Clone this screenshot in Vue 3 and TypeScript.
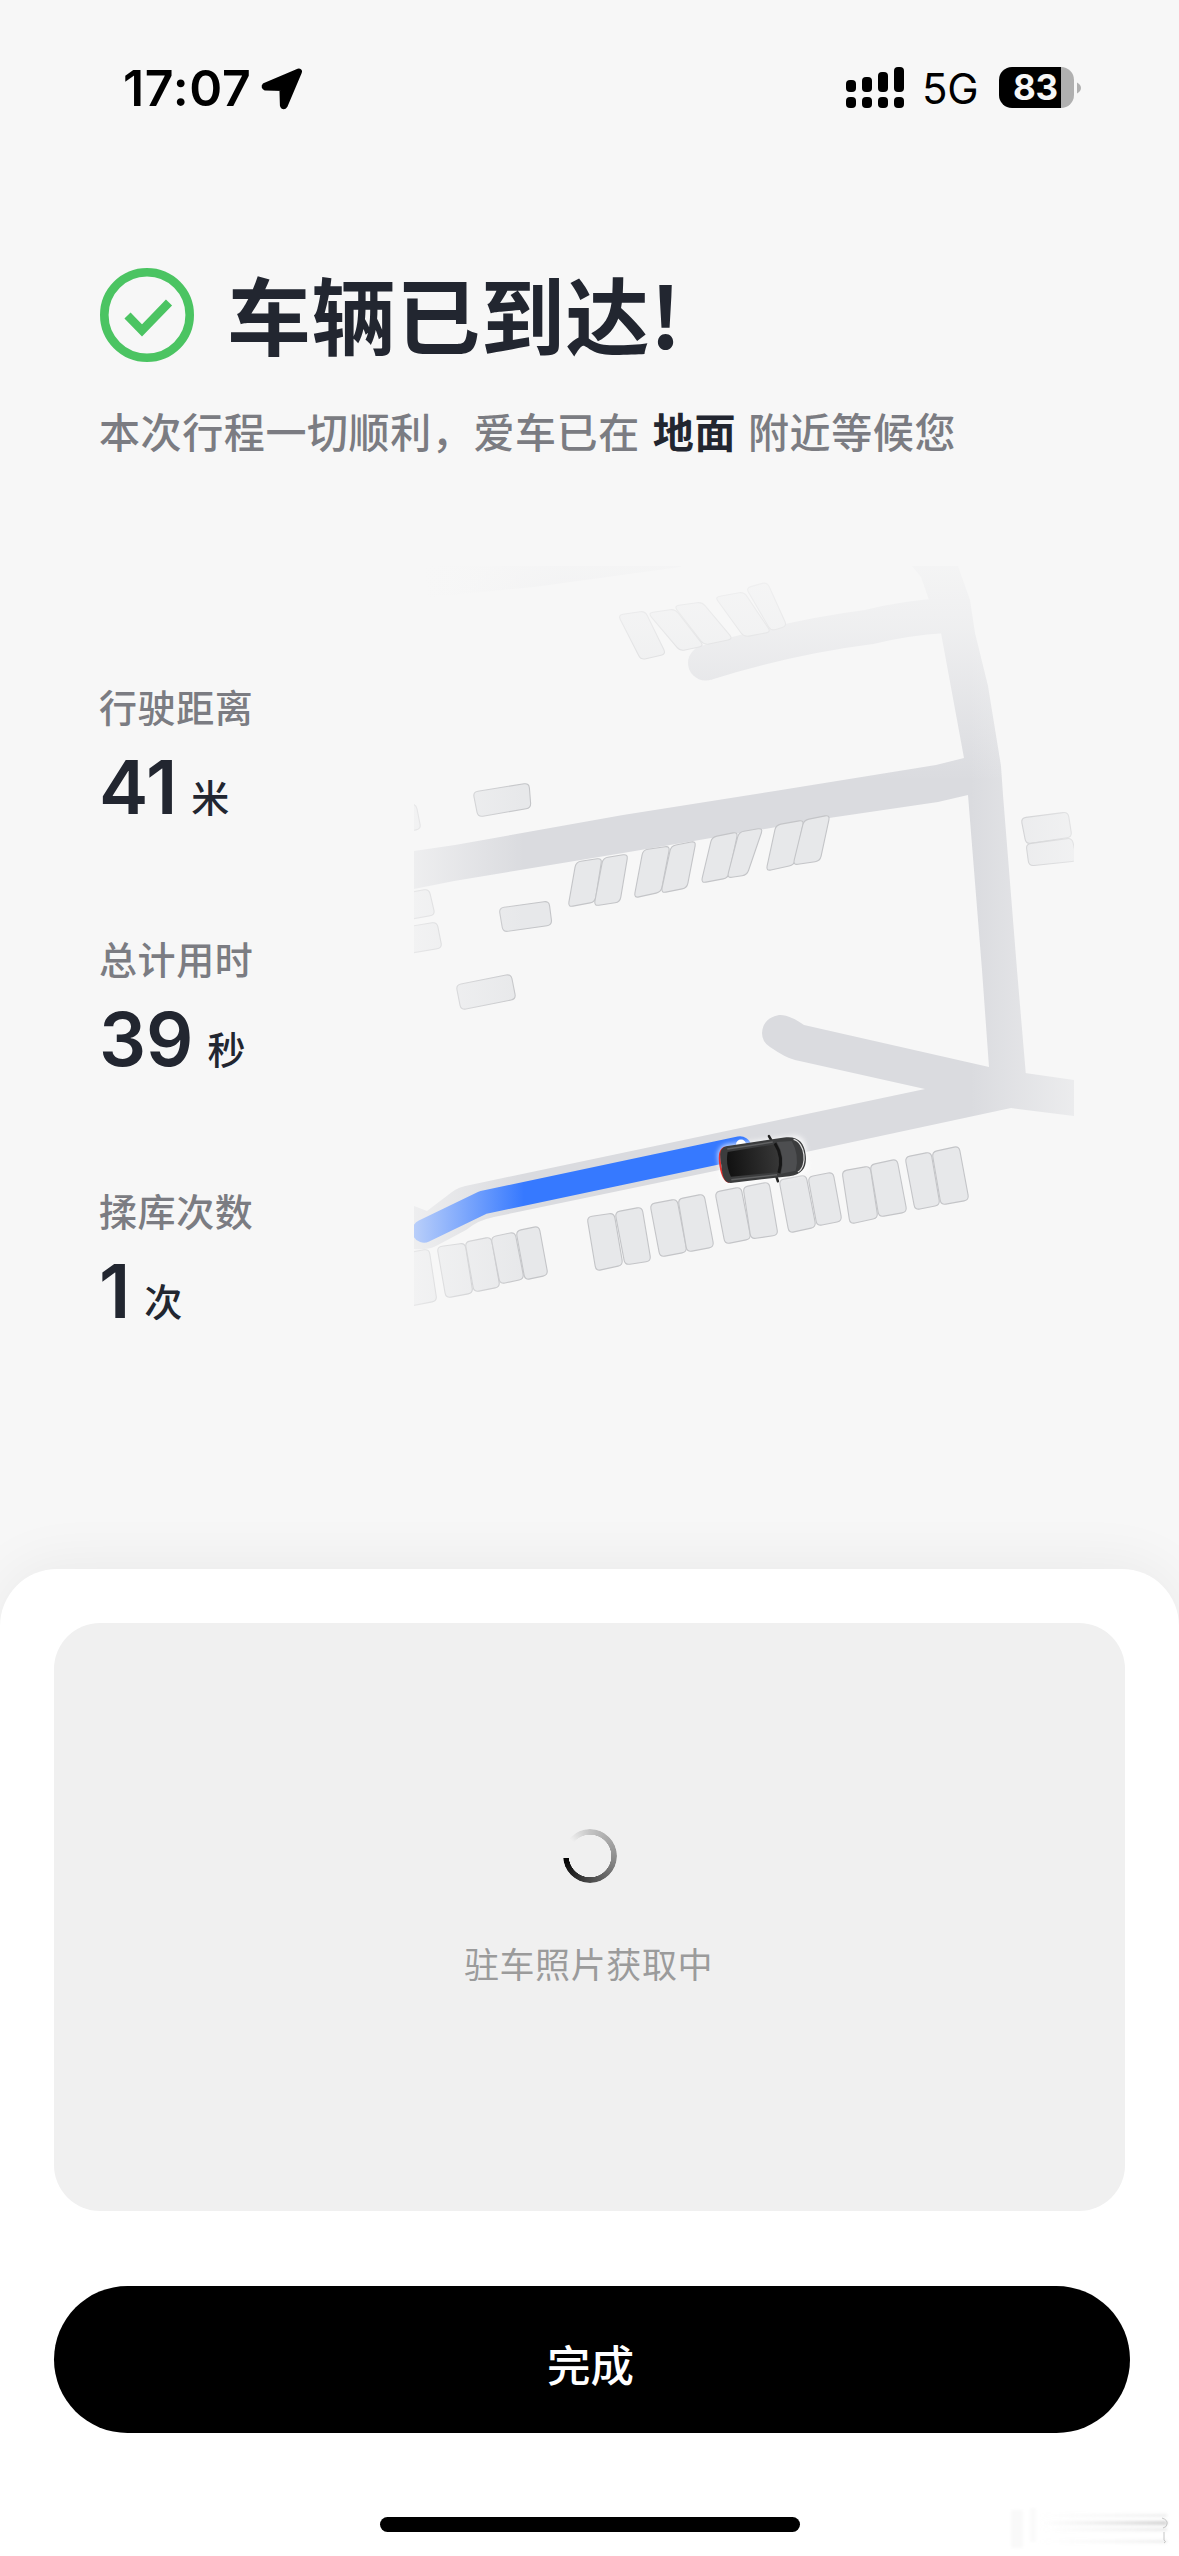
<script setup lang="ts">
type Point = [number, number]

const stats = [
  { label: '行驶距离', value: 41, unit: '米' },
  { label: '总计用时', value: 39, unit: '秒' },
  { label: '揉库次数', value: 1, unit: '次' },
]

const signal = [12, 15, 20, 25]

// parking slots, four corners each
const slots: number[][] = [
  [618, 615, 645, 611, 666, 654, 641, 660],
  [648, 613, 675, 609, 704, 646, 680, 651],
  [674, 606, 702, 602, 733, 639, 704, 645],
  [715, 597, 744, 592, 771, 632, 744, 637],
  [746, 588, 767, 582, 787, 626, 771, 631],
  [473, 792, 529, 783, 531, 808, 478, 817],
  [499, 908, 549, 901, 552, 925, 503, 932],
  [456, 985, 511, 974, 516, 999, 461, 1010],
  [400, 804, 416, 804, 421, 829, 400, 833],
  [400, 894, 429, 889, 435, 915, 400, 921],
  [400, 928, 437, 922, 442, 948, 400, 955],
  [576, 862, 602, 858, 595, 902, 568, 907],
  [603, 858, 628, 854, 620, 902, 594, 906],
  [643, 850, 670, 846, 661, 892, 634, 898],
  [671, 846, 696, 841, 687, 888, 661, 893],
  [712, 837, 738, 832, 728, 878, 701, 883],
  [739, 832, 763, 828, 747, 875, 727, 878],
  [776, 825, 804, 820, 794, 865, 766, 871],
  [804, 820, 830, 815, 820, 861, 793, 865],
  [1021, 818, 1068, 812, 1072, 837, 1026, 844],
  [1026, 844, 1072, 838, 1077, 861, 1029, 866],
  [400, 1254, 429, 1249, 437, 1301, 400, 1308],
  [437, 1247, 465, 1243, 473, 1293, 446, 1298],
  [465, 1242, 491, 1237, 500, 1287, 474, 1292],
  [491, 1237, 515, 1232, 524, 1279, 500, 1284],
  [516, 1231, 539, 1226, 548, 1275, 525, 1280],
  [587, 1217, 614, 1213, 623, 1265, 596, 1271],
  [615, 1212, 642, 1207, 651, 1261, 625, 1265],
  [650, 1204, 677, 1199, 687, 1252, 660, 1257],
  [678, 1199, 704, 1194, 714, 1247, 687, 1252],
  [715, 1192, 741, 1187, 751, 1239, 725, 1244],
  [743, 1187, 769, 1182, 778, 1235, 751, 1239],
  [779, 1180, 806, 1175, 816, 1227, 789, 1233],
  [808, 1177, 833, 1172, 842, 1221, 817, 1226],
  [842, 1171, 870, 1166, 878, 1218, 850, 1224],
  [870, 1165, 897, 1159, 907, 1212, 879, 1217],
  [905, 1157, 931, 1152, 940, 1205, 915, 1210],
  [932, 1152, 959, 1146, 969, 1200, 941, 1205],
]

// quad outline with softened corners
function slotPath(c: number[], r = 5) {
  const pts: Point[] = [[c[0], c[1]], [c[2], c[3]], [c[4], c[5]], [c[6], c[7]]]
  const toward = (a: Point, b: Point) => {
    const d = Math.hypot(b[0] - a[0], b[1] - a[1])
    return `${(a[0] + ((b[0] - a[0]) * r) / d).toFixed(1)} ${(a[1] + ((b[1] - a[1]) * r) / d).toFixed(1)}`
  }
  return pts.map((p, i) => {
    const prev = pts[(i + 3) % 4]
    const next = pts[(i + 1) % 4]
    return `${i ? 'L' : 'M'}${toward(p, prev)}Q${p[0]} ${p[1]} ${toward(p, next)}`
  }).join('') + 'Z'
}
</script>

<template>
  <div class="screen">
    <header class="status">
      <span class="time">17:07</span>
      <svg class="locate" viewBox="0 0 40 40">
        <path d="M36 3.500 L4 17 Q3 18 4.500 18.500 L20.500 19 L21 35.500 Q21.500 37 22.500 35.500 Z" fill="#000" stroke="#000" stroke-width="6" stroke-linejoin="round" />
      </svg>
      <div class="signal">
        <div v-for="h in signal" :key="h" class="bar">
          <i :style="{ height: h + 'px' }"></i>
          <b></b>
        </div>
      </div>
      <span class="net">5G</span>
      <div class="battery"><span>83</span></div>
      <svg class="nub" viewBox="0 0 5 14"><path d="M0 0Q5 3 5 7T0 14Z" fill="#b0b0b0" /></svg>
    </header>

    <section class="headline">
      <svg class="check" viewBox="0 0 94 94" fill="none" stroke="#4bc462">
        <circle cx="47" cy="47" r="42.700" stroke-width="8.600" />
        <path d="M27.500 47.500L42 62.500L69 34.500" stroke-width="8.500" />
      </svg>
      <h1>车辆已到达!</h1>
    </section>
    <p class="sub">本次行程一切顺利，爱车已在<strong>地面</strong>附近等候您</p>

    <section class="trip">
      <div class="stats">
        <div v-for="s in stats" :key="s.label" class="stat">
          <div class="label">{{ s.label }}</div>
          <div class="value">{{ s.value }}<small>{{ s.unit }}</small></div>
        </div>
      </div>

      <svg class="map" viewBox="414 566 660 760">
        <defs>
          <linearGradient id="fadeLeft">
            <stop offset="0" stop-color="#f7f7f7" stop-opacity=".68" />
            <stop offset="1" stop-color="#f7f7f7" stop-opacity="0" />
          </linearGradient>
          <linearGradient id="fadeRight">
            <stop offset="0" stop-color="#f7f7f7" stop-opacity="0" />
            <stop offset="1" stop-color="#f7f7f7" stop-opacity=".6" />
          </linearGradient>
          <linearGradient id="fadeTop" x2="0" y2="1">
            <stop offset="0" stop-color="#f7f7f7" stop-opacity=".9" />
            <stop offset=".3" stop-color="#f7f7f7" stop-opacity=".7" />
            <stop offset="1" stop-color="#f7f7f7" stop-opacity="0" />
          </linearGradient>
          <linearGradient id="corner" gradientUnits="userSpaceOnUse" x1="425" y1="0" x2="560" y2="0">
            <stop offset="0" stop-color="#dadbdf" stop-opacity="0" />
            <stop offset="1" stop-color="#dadbdf" stop-opacity=".8" />
          </linearGradient>
          <linearGradient id="roof" x2="1">
            <stop offset="0" stop-color="#111" />
            <stop offset="1" stop-color="#383838" />
          </linearGradient>
          <filter id="soft" x="-30%" y="-30%" width="160%" height="160%">
            <feGaussianBlur stdDeviation="2.500" />
          </filter>
        </defs>

        <g fill="#dadbdf">
          <path d="M425 560H690L680 567L534 587L427 597Z" fill="url(#corner)" />
          <path d="M706 663Q790 637 869 627Q905 618 945 615.500" fill="none" stroke="#dadbdf" stroke-width="35" />
          <circle cx="705.500" cy="663" r="17.500" />
          <path d="M912 566L921 577L929 600L941 633L964 758L968 795L982 970L989 1067L1000 1106L1026 1076L1017 970L1003 795L1001 766L988 686L975 633L970 600L958 566Z" />
          <path d="M414 851L455 845L623 815L775 791L936 765L964 758L985 760L985 790L968 795L938 802L829 818L623 853L454 881L414 889Z" />
          <path d="M779 1015Q788 1014 804 1025L989 1067L1025 1073L1074 1080V1116L1011 1108L806 1152L494 1217Q478 1220 466 1230L436 1246Q428 1250 414 1249V1206L427 1211L452 1192Q458 1187 470 1185L712 1134L925 1089L795 1060Q786 1058 770 1047Q762 1042 762 1033Q763 1018 779 1015Z" />
        </g>

        <g fill="#e7e8ea" stroke="#c4c5c8" stroke-width="1.100">
          <path v-for="(s, i) in slots" :key="i" :d="slotPath(s)" />
        </g>

        <path d="M424 1231L483 1202.500L740 1148" fill="none" stroke="#3679ff" stroke-width="23.500" stroke-linecap="round" stroke-linejoin="round" />
        <circle cx="741" cy="1144.500" r="5" fill="#fff" />

        <rect x="414" y="566" width="110" height="760" fill="url(#fadeLeft)" />
        <rect x="970" y="566" width="104" height="760" fill="url(#fadeRight)" />
        <rect x="414" y="566" width="660" height="215" fill="url(#fadeTop)" />

        <g transform="translate(763 1160) rotate(-7.500)">
          <rect x="-44" y="-20" width="88" height="40" rx="11" fill="#fff" opacity=".8" filter="url(#soft)" />
          <path d="M11 -18L9 -23M11 18L12 23" stroke="#222" stroke-width="2.500" stroke-linecap="round" />
          <path d="M-36 -17.500Q-43.500 -16 -43 0T-36 17.500" fill="none" stroke="#e8312f" stroke-width="2" />
          <path d="M-35 -18.500L24 -19.500C38 -19.500 43 -12 43 0C43 12 38 19.500 24 19.500L-35 18.500C-43 17 -42 8 -42 0C-42 -8 -43 -17 -35 -18.500Z" fill="#3b3c3d" />
          <path d="M-34 -12.500L15 -14Q21 0 15 14L-34 12.500Q-38 0 -34 -12.500Z" fill="url(#roof)" />
          <path d="M16 -16Q23 0 16 16L31 15Q37 0 31 -15Z" fill="#4d4e50" />
          <path d="M-34 -15.500L12 -16.500M-34 15.500L12 16.500" stroke="#606162" stroke-width="1.500" />
          <path d="M14 -15Q21 0 14 15" fill="none" stroke="#161616" stroke-width="3" />
          <path d="M33 -16.500C44 -12 44 12 33 16.500" fill="none" stroke="#e0e0e0" stroke-width="1.200" />
        </g>
      </svg>
    </section>

    <section class="sheet">
      <div class="photo">
        <div class="spinner"></div>
        <span>驻车照片获取中</span>
      </div>
      <button class="done">完成</button>
      <footer>
        <div class="home"></div>
        <svg class="smudge" viewBox="0 0 180 50">
          <defs>
            <linearGradient id="streak">
              <stop offset="0" stop-color="#ccc" stop-opacity="0" />
              <stop offset="1" stop-color="#b5b5b5" stop-opacity=".6" />
            </linearGradient>
            <filter id="haze"><feGaussianBlur stdDeviation="1.500" /></filter>
          </defs>
          <g filter="url(#haze)">
            <rect x="12" y="4" width="12" height="38" fill="#f9f9f9" />
            <rect x="31" y="2" width="6" height="34" fill="#fafafa" />
            <rect x="40" y="8" width="128" height="3" fill="url(#streak)" opacity=".4" />
            <rect x="40" y="15" width="128" height="4" fill="url(#streak)" />
            <rect x="40" y="22" width="128" height="3" fill="url(#streak)" opacity=".5" />
            <rect x="40" y="34" width="128" height="3" fill="url(#streak)" opacity=".4" />
          </g>
          <path d="M163 12Q169 14 168 18Q168 21 164 22M165 26V34Q168 36 165 37" fill="none" stroke="#c4c4c4" stroke-width="1" />
        </svg>
      </footer>
    </section>
  </div>
</template>

<style>
body{background:#f7f7f7}
</style>

<style scoped>
.screen{width:1179px;height:2556px;overflow:hidden;display:flex;flex-direction:column;background:#f7f7f7;color:#222630;font-family:Inter,"Noto Sans CJK SC",sans-serif;}
.status{flex:none;display:flex;align-items:center;height:175px;padding:0 98px 0 123px;color:#000;box-sizing:border-box}
.time{width:138px;font-size:50px;font-weight:600;letter-spacing:.7px;line-height:60px;white-space:nowrap}
.locate{width:42px;height:42px;margin-right:543px;margin-top:2px}
.signal{display:flex;gap:6px;align-items:flex-end;height:41px;flex:none}
.bar{width:10px;display:flex;flex-direction:column;gap:5px}
.bar i{display:block;background:#000;border-radius:4px}
.bar b{display:block;height:11px;background:#000;border-radius:4px}
.net{margin-left:18px;width:77px;font-size:42px;line-height:50px;margin-top:3px;letter-spacing:-.4px;flex:none}
.battery{flex:none;width:75px;height:41px;border-radius:13px;background:linear-gradient(90deg,#000 62px,#b0b0b0 62px);display:flex;align-items:center;justify-content:center}
.battery span{color:#f7f7f7;font-size:35px;font-weight:700;line-height:41px;letter-spacing:-.3px;margin-right:2px}
.nub{flex:none;width:4px;height:14px;margin-left:3px}
.headline{flex:none;display:flex;align-items:center;height:94px;margin:93px 0 0 100px}
.check{width:94px;height:94px}
h1{margin:-5px 0 0 33px;font-family:"Noto Sans CJK SC",sans-serif;font-size:84px;font-weight:700;letter-spacing:.6px;line-height:94px;white-space:nowrap}
.sub{flex:none;margin:38px 0 3px 99px;height:60px;line-height:60px;font-family:"Noto Sans CJK SC",sans-serif;font-size:41px;letter-spacing:.6px;font-weight:500;color:#7b7c82;white-space:nowrap}
.sub strong{font-weight:700;color:#222630;margin:0 12px 0 13px}
.trip{flex:none;display:flex;height:1106px;margin-left:99px}
.stats{width:315px;padding-top:218px;box-sizing:border-box}
.stat{height:252px}
.label{font-size:38px;line-height:54px;letter-spacing:.6px;font-weight:500;color:#7b7c82}
.value{font-size:74px;line-height:88px;height:100px;margin-top:8px;font-weight:600;letter-spacing:0;white-space:nowrap}
.value small{position:relative;top:-2px;font-size:38px;margin-left:14px;font-weight:500}
.map{width:660px;height:760px;margin-top:103px}
.sheet{flex:1;display:flex;flex-direction:column;align-items:center;background:#fff;border-radius:57px 57px 0 0;box-shadow:0 -4px 60px rgba(0,0,0,.06);padding-top:54px}
.photo{width:1071px;height:588px;border-radius:46px;background:#f0f0f0;display:flex;flex-direction:column;align-items:center}
.spinner{width:54px;height:54px;margin-top:206px;border-radius:50%;background:conic-gradient(from 265deg,transparent 45deg,#c4c4c4 95deg,#909090 185deg,#4a4a4a 275deg,#000 360deg);-webkit-mask:radial-gradient(circle,transparent 21px,#000 21.500px);mask:radial-gradient(circle,transparent 21px,#000 21.500px)}
.photo span{margin:57px 2px 0 0;font-size:35px;line-height:50px;letter-spacing:.6px;color:#9b9b9b}
.done{width:1076px;height:147px;margin:75px 0 0 5px;padding:9px 3px 0 0;border:0;border-radius:74px;background:#000;color:#fff;font:500 43.500px/60px "Noto Sans CJK SC",sans-serif;box-sizing:border-box}
footer{width:100%;height:123px;display:flex;align-items:flex-end;justify-content:flex-end}
.home{width:420px;height:15px;border-radius:8px;background:#000;margin:0 199px 24px 0}
.smudge{width:180px;height:50px}
</style>
